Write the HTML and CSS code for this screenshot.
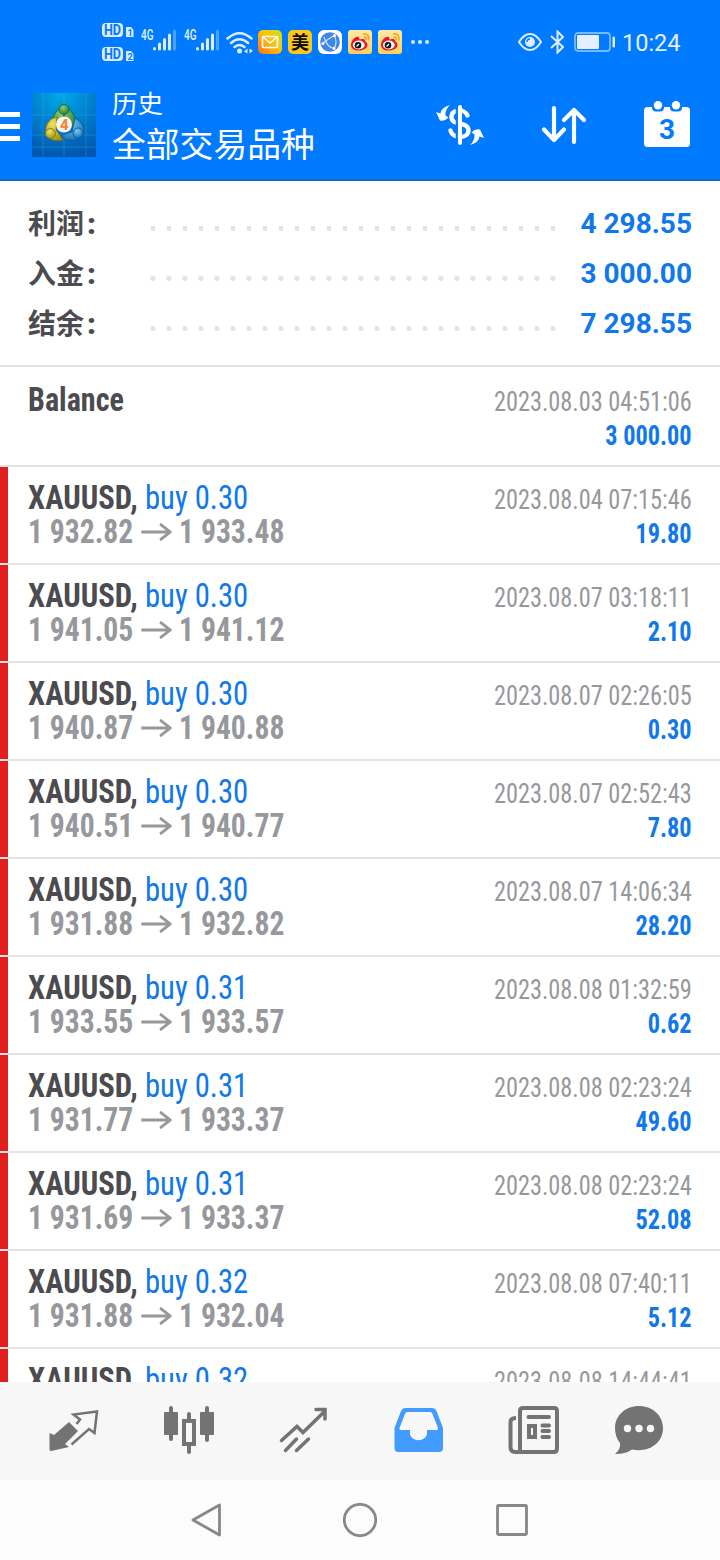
FILE: index.html
```html
<!DOCTYPE html>
<html lang="zh-CN">
<head>
<meta charset="utf-8">
<title>历史</title>
<link rel="stylesheet" href="styles.css">
</head>
<body>
<svg class="defs" width="0" height="0">
  <defs>
    <linearGradient id="mail" x1="1" y1="0" x2="0" y2="1"><stop offset="0" stop-color="#c8e020"/><stop offset=".45" stop-color="#ffc408"/><stop offset="1" stop-color="#ff6a1c"/></linearGradient>
    <linearGradient id="wb" x1="0" y1="0" x2="0" y2="1"><stop offset="0" stop-color="#ffe9a6"/><stop offset="1" stop-color="#ffd05a"/></linearGradient>
    <radialGradient id="logobg" cx=".45" cy="0" r="1"><stop offset="0" stop-color="#00abe6"/><stop offset=".5" stop-color="#0080cf"/><stop offset="1" stop-color="#0058ae"/></radialGradient>
    <radialGradient id="gg" cx=".4" cy=".3" r=".8"><stop offset="0" stop-color="#8ccc70"/><stop offset="1" stop-color="#1d7638"/></radialGradient>
    <radialGradient id="gy" cx=".4" cy=".3" r=".8"><stop offset="0" stop-color="#f2e45c"/><stop offset="1" stop-color="#9b8c0c"/></radialGradient>
    <radialGradient id="gb" cx=".4" cy=".3" r=".8"><stop offset="0" stop-color="#75c8f5"/><stop offset="1" stop-color="#0b68b4"/></radialGradient>
    <symbol id="arrow" viewBox="0 0 34 20"><path d="M0 10H33M21 2L32.500 10L21 18" fill="none" stroke="#96989c" stroke-width="2.900"/></symbol>
    <symbol id="signal" viewBox="0 0 38 28">
      <text x="0" y="14.500" font-size="14" font-weight="600" fill="#dcebff" textLength="12.500" lengthAdjust="spacingAndGlyphs">4G</text>
      <g stroke="#dcebff" stroke-width="3" stroke-linecap="round"><path d="M13.500 23.500V24M18.500 19V24M23.500 14.500V24M28.500 10V24"/><path d="M33.500 6V24" opacity=".35"/></g>
    </symbol>
    <symbol id="weibo" viewBox="0 0 24 24">
      <rect width="24" height="24" rx="3" fill="url(#wb)"/>
      <path d="M3 15C3 10 8 5.500 10.500 7C12 8 11 9 11.500 9.500C13 9 16.500 8 17 10.500C17.200 12 19.500 12 19.500 15C19.500 18 15.500 20.500 11 20.500C6 20.500 3 18.500 3 15Z" fill="#e6162d"/>
      <ellipse cx="10.800" cy="15" rx="6" ry="4.400" fill="#fff"/><circle cx="10" cy="15.300" r="3.300" fill="#111"/><path d="M8.500 16.500L11 14" stroke="#fff" stroke-width="1.300"/>
      <path d="M15 4C19 3 22 6 21 10.500M15.500 7.200C17.500 6.800 18.800 8 18.300 10" fill="none" stroke="#ff9f1c" stroke-width="1.600"/>
    </symbol>
  </defs>
</svg>
<div class="phone">
  <div class="status">
    <svg class="hd" viewBox="0 0 32 40" width="32" height="40">
      <g fill="#dcebff"><rect width="21" height="14" rx="4"/><path d="M24 4H29L31.500 7V14H24Z"/><rect y="24" width="21" height="14" rx="4"/><path d="M24 28H29L31.500 31V38H24Z"/></g>
      <g fill="#007aff" font-weight="700"><text x="2" y="12" font-size="14" textLength="17" lengthAdjust="spacingAndGlyphs">HD</text><text x="2" y="36" font-size="14" textLength="17" lengthAdjust="spacingAndGlyphs">HD</text><text x="25.500" y="12.500" font-size="9">1</text><text x="25.500" y="36.500" font-size="9">2</text></g>
    </svg>
    <svg class="sig" width="38" height="28"><use href="#signal"/></svg>
    <svg class="sig2" width="38" height="28"><use href="#signal"/></svg>
    <svg class="wifi" viewBox="0 0 28 24" width="28" height="24"><g fill="none" stroke="#dcebff" stroke-width="2.500" stroke-linecap="round"><path d="M1.500 7.500Q13.500-3 25.500 7.500M5 12Q13.500 4.500 22 12M8.500 16Q13.500 12 18.500 16"/></g><circle cx="13.500" cy="20" r="2.500" fill="#dcebff"/><path d="M21.500 17.500V22.500L18 20.500ZM23.500 17.500V22.500L27 19.800Z" fill="#dcebff"/></svg>
    <div class="apps">
      <svg viewBox="0 0 24 24" width="24" height="24"><rect width="24" height="24" rx="5" fill="url(#mail)"/><rect x="4.500" y="6.500" width="15" height="11" rx="1" fill="none" stroke="#fff" stroke-width="1.600"/><path d="M5 7L12 13L19 7" fill="none" stroke="#fff" stroke-width="1.600"/></svg>
      <span class="mei">美</span>
      <svg viewBox="0 0 24 24" width="24" height="24"><rect width="24" height="24" rx="6" fill="#fff"/><circle cx="12" cy="12" r="9.800" fill="#3f86ea"/><g fill="none" stroke="#cfe4ff" stroke-width="1.200"><path d="M4 14Q10 9 17 5M6 7Q9 18 17 18.500M16 5Q20 12 16 19"/></g><g fill="#fff"><circle cx="5" cy="13.500" r="1.500"/><circle cx="16.500" cy="5.500" r="1.500"/><circle cx="16" cy="18.500" r="1.500"/></g></svg>
      <svg width="24" height="24"><use href="#weibo"/></svg>
      <svg width="24" height="24"><use href="#weibo"/></svg>
      <svg class="dots3" viewBox="0 0 20 24" width="20" height="24" fill="#dcebff"><circle cx="3" cy="12" r="2"/><circle cx="10" cy="12" r="2"/><circle cx="17" cy="12" r="2"/></svg>
    </div>
    <div class="right">
      <svg viewBox="0 0 24 20" width="24" height="20"><path d="M1 10Q6 2 12 2T23 10Q18 18 12 18T1 10Z" fill="none" stroke="#dcebff" stroke-width="2"/><circle cx="12" cy="10" r="5" fill="#dcebff"/><path d="M9 10A3 3 0 0 1 12 7" fill="none" stroke="#007aff" stroke-width="1.300"/></svg>
      <svg class="bt" viewBox="0 0 14 24" width="14" height="24"><path d="M1 6L13 17L7.500 22.500V1.500L13 7L1 18" fill="none" stroke="#dcebff" stroke-width="2"/></svg>
      <svg class="bat" viewBox="0 0 42 20" width="42" height="20"><rect x="1" y="1" width="35" height="18" rx="3" fill="none" stroke="#dcebff" stroke-opacity=".55" stroke-width="1.800"/><rect x="3" y="3" width="22" height="14" rx="1" fill="#e4efff"/><rect x="38.500" y="4.500" width="2.500" height="11" rx="1.200" fill="#dcebff"/></svg>
      <span class="clock">10:24</span>
    </div>
  </div>
  <header class="bar">
    <div class="menu"><i></i><i></i><i></i></div>
    <svg class="logo" viewBox="0 0 64 64" width="64" height="64">
      <rect width="64" height="64" fill="url(#logobg)"/>
      <path d="M11 0V64M32 0V64M54 0V64M0 22H64M0 42H64M0 54H64" stroke="#52b9ef" stroke-width=".7" opacity=".4"/>
      <path d="M20 34C20 8 44 8 44 34L36 36L32 22L27 35Z" fill="url(#gg)" stroke="#17602c" stroke-width=".8"/>
      <path d="M25 24C10 26 8 52 31 47L27 41L24 37Z" fill="url(#gy)" stroke="#7c7110" stroke-width=".8"/>
      <path d="M43 25C58 33 52 49 40 47C35 47 31 47 29 42L40 39Z" fill="url(#gb)" stroke="#0a5590" stroke-width=".8"/>
      <circle cx="32" cy="16.500" r="5" fill="url(#gg)" stroke="#17602c" stroke-width=".8"/><circle cx="18.500" cy="40.500" r="5" fill="url(#gy)" stroke="#7c7110" stroke-width=".8"/><circle cx="46" cy="40" r="5" fill="url(#gb)" stroke="#0a5590" stroke-width=".8"/>
      <circle cx="32" cy="31.500" r="8" fill="#f6f4f0"/><text x="28" y="37" font-size="15" font-weight="700" fill="#ef8434">4</text>
    </svg>
    <div class="titles"><div class="t1">历史</div><div class="t2">全部交易品种</div></div>
    <div class="actions">
      <svg viewBox="0 0 50 44" width="50" height="44"><g fill="none" stroke="#fff"><path d="M32.500 12.500C30 5.500 16.500 5.500 16.500 14C16.500 24 33.500 17.500 33.500 27.500C33.500 36 17.500 36 15.500 27.500" stroke-width="4.400" stroke-linecap="round"/><path d="M21.800 5V39" stroke="#007aff" stroke-width="2.200"/><path d="M25 4V40" stroke-width="4" stroke-linecap="round"/></g><path d="M15 2Q6 4.500 5.500 10.500L1 9L5 17.500Q10 18.500 13.500 14.500L10.500 12.500Q10 6.500 15 2Z" fill="#fff"/><path transform="rotate(180 25 22)" d="M15 2Q6 4.500 5.500 10.500L1 9L5 17.500Q10 18.500 13.500 14.500L10.500 12.500Q10 6.500 15 2Z" fill="#fff"/></svg>
      <svg viewBox="0 0 46 40" width="46" height="40"><path d="M13 3V35M3 24.500L13 35L23 24.500M33 37V5M23 15L33 5L43 15" fill="none" stroke="#fff" stroke-width="4.200" stroke-linecap="round" stroke-linejoin="round"/></svg>
      <svg viewBox="0 0 46 46" width="46" height="46"><rect y="6" width="46" height="40" rx="3.500" fill="#fff"/><path d="M8 5V7Q8.500 10.500 12 10.500H16Q19.500 10.500 20 7V5ZM26 5V7Q26.500 10.500 30 10.500H34Q37.500 10.500 38 7V5Z" fill="#007aff"/><circle cx="14" cy="4.200" r="4.200" fill="#fff"/><circle cx="32" cy="4.200" r="4.200" fill="#fff"/><text x="23" y="37.500" font-size="28" font-weight="700" text-anchor="middle" fill="#007aff">3</text></svg>
    </div>
  </header>
  <section class="summary">
    <div class="sum"><b>利润<span>:</span></b><i></i><strong>4 298.55</strong></div>
    <div class="sum"><b>入金<span>:</span></b><i></i><strong>3 000.00</strong></div>
    <div class="sum"><b>结余<span>:</span></b><i></i><strong>7 298.55</strong></div>
  </section>
  <main class="list">
    <div class="row balance"><div class="l"><div class="p dark">Balance</div></div><div class="r"><div>2023.08.03 04:51:06</div><strong>3 000.00</strong></div></div>
    <div class="row deal"><div class="l"><div class="s"><b>XAUUSD,</b> <span>buy 0.30</span></div><div class="p">1 932.82<svg><use href="#arrow"/></svg>1 933.48</div></div><div class="r"><div>2023.08.04 07:15:46</div><strong>19.80</strong></div></div>
    <div class="row deal"><div class="l"><div class="s"><b>XAUUSD,</b> <span>buy 0.30</span></div><div class="p">1 941.05<svg><use href="#arrow"/></svg>1 941.12</div></div><div class="r"><div>2023.08.07 03:18:11</div><strong>2.10</strong></div></div>
    <div class="row deal"><div class="l"><div class="s"><b>XAUUSD,</b> <span>buy 0.30</span></div><div class="p">1 940.87<svg><use href="#arrow"/></svg>1 940.88</div></div><div class="r"><div>2023.08.07 02:26:05</div><strong>0.30</strong></div></div>
    <div class="row deal"><div class="l"><div class="s"><b>XAUUSD,</b> <span>buy 0.30</span></div><div class="p">1 940.51<svg><use href="#arrow"/></svg>1 940.77</div></div><div class="r"><div>2023.08.07 02:52:43</div><strong>7.80</strong></div></div>
    <div class="row deal"><div class="l"><div class="s"><b>XAUUSD,</b> <span>buy 0.30</span></div><div class="p">1 931.88<svg><use href="#arrow"/></svg>1 932.82</div></div><div class="r"><div>2023.08.07 14:06:34</div><strong>28.20</strong></div></div>
    <div class="row deal"><div class="l"><div class="s"><b>XAUUSD,</b> <span>buy 0.31</span></div><div class="p">1 933.55<svg><use href="#arrow"/></svg>1 933.57</div></div><div class="r"><div>2023.08.08 01:32:59</div><strong>0.62</strong></div></div>
    <div class="row deal"><div class="l"><div class="s"><b>XAUUSD,</b> <span>buy 0.31</span></div><div class="p">1 931.77<svg><use href="#arrow"/></svg>1 933.37</div></div><div class="r"><div>2023.08.08 02:23:24</div><strong>49.60</strong></div></div>
    <div class="row deal"><div class="l"><div class="s"><b>XAUUSD,</b> <span>buy 0.31</span></div><div class="p">1 931.69<svg><use href="#arrow"/></svg>1 933.37</div></div><div class="r"><div>2023.08.08 02:23:24</div><strong>52.08</strong></div></div>
    <div class="row deal"><div class="l"><div class="s"><b>XAUUSD,</b> <span>buy 0.32</span></div><div class="p">1 931.88<svg><use href="#arrow"/></svg>1 932.04</div></div><div class="r"><div>2023.08.08 07:40:11</div><strong>5.12</strong></div></div>
    <div class="row deal"><div class="l"><div class="s"><b>XAUUSD,</b> <span>buy 0.32</span></div></div><div class="r"><div>2023.08.08 14:44:41</div></div></div>
  </main>
  <nav class="tabs">
    <svg viewBox="0 0 50 50" width="50" height="50"><path d="M.500 27L5 29L20 16L29 25L16 38L20 41L2 45Q.500 45 .500 43Z" fill="#737373"/><path d="M27.500 18L31 13.500L24.500 8.500L48 5.500L45.500 27L40 23L22.500 38.500" fill="none" stroke="#737373" stroke-width="2.500"/></svg>
    <svg viewBox="0 0 52 50" width="52" height="50"><g fill="none" stroke="#737373" stroke-width="4" stroke-linecap="round"><path d="M8 2V33M44 2V34M26 8V14M26 40V46"/></g><rect x="1" y="6" width="14" height="23" rx="1" fill="#737373"/><rect x="37" y="6" width="14" height="23" rx="1" fill="#737373"/><rect x="21" y="15" width="10" height="23" fill="none" stroke="#737373" stroke-width="4"/></svg>
    <svg viewBox="0 0 50 50" width="50" height="50"><path d="M2.500 34.500L18 20.500L24 26.500L46 5M37 3.500H46V13M6.500 44.500L17.500 33M17.500 44.500L29.500 33" fill="none" stroke="#737373" stroke-width="3.500" stroke-linecap="round"/></svg>
    <svg viewBox="0 0 50 50" width="50" height="50"><path fill="#429bff" fill-rule="evenodd" d="M11 2H38Q41 2 42.500 5L49 22V42Q49 46 45 46H4.500Q.500 46 .500 42V22L7 5Q8.500 2 11 2ZM13.500 6Q11.500 6 11 8L5.500 22Q5 24 7 24H16V27C16 36.500 33 36.500 33 27V24H42.500Q44.500 24 44 22L38.500 8Q38 6 36 6Z"/></svg>
    <svg viewBox="0 0 52 50" width="52" height="50"><g fill="none" stroke="#737373" stroke-width="4"><path d="M8 12Q2.500 12 2.500 16V41Q2.500 46 7 46H46Q49 46 49 42V5Q49 2 46 2H15Q12 2 12 5V46"/><path d="M20.500 11H41M34.500 19.500H41M34.500 25H41M34.500 31H41" stroke-linecap="round"/><rect x="21" y="20" width="6" height="11"/></g></svg>
    <svg viewBox="0 0 50 50" width="50" height="50"><path d="M25 0C38 0 49 9 49 22C49 37 35 47 18 43.500Q12 48 1 48Q7 43 6 37Q1 31 1 22C1 9 12 0 25 0Z" fill="#737373"/><g fill="#f7f7f7"><circle cx="13.500" cy="22.500" r="3.700"/><circle cx="25" cy="22.500" r="3.700"/><circle cx="36.500" cy="22.500" r="3.700"/></g></svg>
  </nav>
  <div class="sysnav">
    <svg viewBox="0 0 36 36" width="36" height="36"><path d="M30.500 3L4 18L30.500 33Z"/></svg>
    <svg viewBox="0 0 36 36" width="36" height="36"><circle cx="18" cy="18" r="15.700"/></svg>
    <svg viewBox="0 0 36 36" width="36" height="36"><rect x="3.500" y="3.500" width="29" height="29" rx="1"/></svg>
  </div>
</div>
</body>
</html>
```
FILE: styles.css
```css
* { box-sizing: border-box; }
body { margin: 0; font-family: Roboto, "Noto Sans CJK SC", sans-serif; background: #fff; }
svg { display: block; flex: none; }
.defs { position: absolute; }
.phone { width: 720px; height: 1560px; display: flex; flex-direction: column; overflow: hidden; }

.status { height: 84px; flex: none; background: #007aff; display: flex; align-items: flex-start; padding: 0 40px 0 102px; }
.hd { margin-top: 23px; }
.sig { margin: 25px 0 0 7px; }
.sig2 { margin: 25px 0 0 5px; }
.wifi { margin: 31px 0 0 4px; }
.apps { display: flex; gap: 6px; margin: 30px 0 0 4px; }
.mei { width: 24px; height: 24px; border-radius: 5px; background: #ffc61a; color: #111; font: 700 18px/23px "Noto Sans CJK SC", sans-serif; text-align: center; }
.dots3 { margin-left: 2px; }
.right { margin-left: auto; display: flex; align-items: center; height: 84px; }
.bt { margin-left: 8px; }
.bat { margin-left: 10px; }
.clock { margin-left: 6px; font-size: 23.500px; line-height: 30px; width: 58px; color: #e4efff; white-space: nowrap; padding-top: 2px; }

.bar { height: 97px; flex: none; background: #007aff; border-bottom: 2px solid #0a6ad6; display: flex; align-items: flex-start; padding-right: 30px; color: #fff; }
.menu { width: 20px; display: flex; flex-direction: column; gap: 7px; margin-top: 28px; }
.menu i { height: 5px; background: #fff; }
.logo { margin: 9px 16px 0 12px; }
.titles { font-family: "Noto Sans CJK SC", sans-serif; }
.t1 { font-size: 25.500px; line-height: 35px; }
.t2 { font-size: 33.800px; line-height: 48px; }
.actions { margin-left: auto; display: flex; align-items: flex-start; }
.actions svg:nth-child(1) { margin: 19px 1px 0 0; }
.actions svg:nth-child(2) { margin: 21px 0 0 55px; }
.actions svg:nth-child(3) { margin: 17px 0 0 57px; }

.summary { height: 186px; flex: none; border-bottom: 2px solid #e4e4e4; padding: 17px 28px 0; }
.sum { height: 50px; display: flex; align-items: center; }
.sum b { width: 121px; font-family: "Noto Sans CJK SC", sans-serif; font-size: 28px; line-height: 50px; color: #4b4b50; }
.sum b span { font-family: Roboto, sans-serif; font-weight: 900; font-size: 30px; margin-left: 3px; }
.sum i { width: 416px; height: 16px; margin: 10px 0 0 -4px; background: radial-gradient(circle at 8px 8.500px, #e4e4e4 2.200px, transparent 3px) 0 0 / 16px 16px; }
.sum strong { margin-left: auto; font-size: 28px; color: #1078ea; }

.list { flex: 1; min-height: 0; overflow: hidden; font-family: "Roboto Condensed", Roboto, sans-serif; font-stretch: 75%; }
.row { height: 98px; display: flex; justify-content: space-between; border-bottom: 2px solid #e4e4e4; padding: 14px 28px 0; line-height: 34px; white-space: nowrap; }
.deal { background: linear-gradient(#e01f1f, #e01f1f) 0 0 / 8px 100% no-repeat; }
.balance { height: 100px; padding-top: 16px; }
.l { font-size: 33px; color: #4b4b50; }
.l span { color: #1078ea; }
.s { transform: scaleX(.93); transform-origin: left; }
.p { display: flex; align-items: center; font-weight: 700; color: #96989c; transform: scaleX(.898); transform-origin: left; }
.dark { color: #4b4b50; transform: scaleX(.912); }
.p svg { width: 34px; height: 20px; margin: 0 8.500px; }
.r { padding-top: 2px; font-size: 27px; text-align: right; color: #96989c; transform: scaleX(.9); transform-origin: right; }
.r strong { color: #1078ea; }

.tabs { height: 98px; flex: none; background: #f7f7f7; display: flex; gap: 64px; padding: 24px 0 0 49px; }
.tabs svg:nth-child(4) { margin-left: 1px; }
.tabs svg:nth-child(6) { margin-left: -10px; }
.sysnav { height: 80px; flex: none; background: #fcfcfc; display: flex; justify-content: space-between; align-items: center; padding: 0 190px 0 189px; }
.sysnav svg { fill: none; stroke: #888; stroke-width: 2.800; stroke-linejoin: round; }
```
